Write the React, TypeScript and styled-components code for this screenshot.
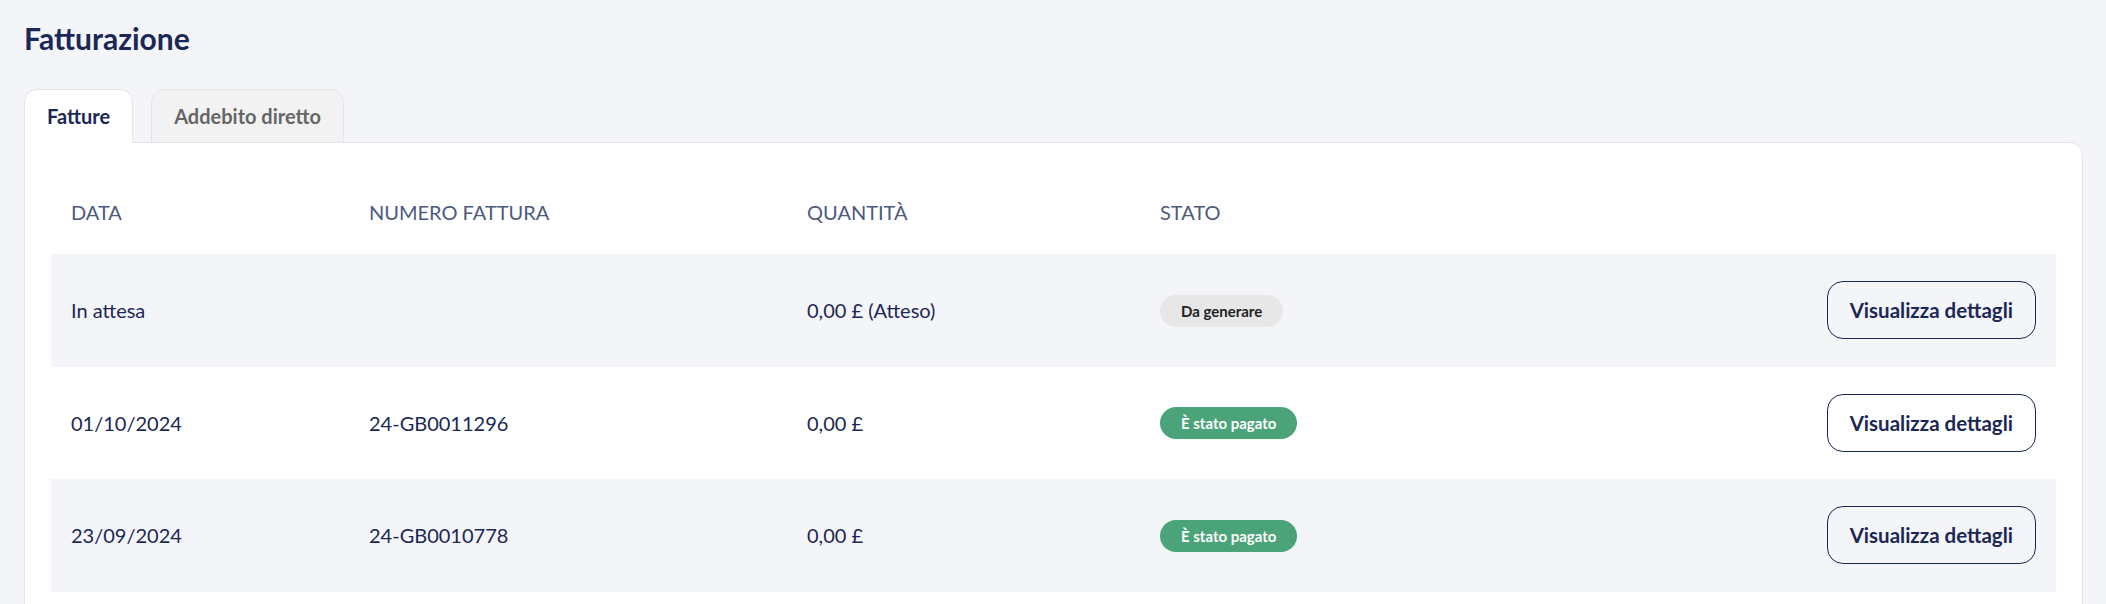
import styled, { createGlobalStyle } from 'styled-components';

const GlobalStyle = createGlobalStyle`
  body {
    margin: 0;
    background: #f4f5f9;
    font-family: Lato, "Noto Sans", sans-serif;
    color: #1b2856;
  }
`;

const Page = styled.div`
  padding: 20px 23px 0 24px;
`;

const Title = styled.h1`
  margin: 0;
  font-size: 30px;
  line-height: 36px;
  font-weight: 700;
  color: #1b2856;
`;

const Tabs = styled.div`
  display: flex;
  gap: 18px;
  margin-top: 33px;
  position: relative;
  z-index: 1;
`;

const Tab = styled.div<{ $active?: boolean }>`
  height: 54px;
  padding: 0 22px;
  display: flex;
  align-items: center;
  font-size: 20px;
  font-weight: 700;
  border: 1px solid #e4e5e9;
  border-bottom: ${(p) => (p.$active ? '1px solid #ffffff' : '1px solid #e4e5e9')};
  border-radius: 13px 13px 0 0;
  background: ${(p) => (p.$active ? '#ffffff' : '#f2f2f3')};
  color: ${(p) => (p.$active ? '#1b2856' : '#666666')};
  margin-bottom: -1px;
  box-sizing: border-box;
`;

const Card = styled.div`
  background: #ffffff;
  border: 1px solid #e4e5e9;
  border-radius: 0 13px 0 0;
  padding: 40px 26px 40px 26px;
`;

const Row = styled.div<{ $shaded?: boolean }>`
  display: grid;
  grid-template-columns: 298px 438px 353px 1fr auto;
  align-items: center;
  min-height: 112.5px;
  background: ${(p) => (p.$shaded ? '#f4f5f9' : '#ffffff')};
`;

const HeadRow = styled(Row)`
  min-height: 0;
`;

const HeadCell = styled.div`
  padding: 14px 20px 27px;
  line-height: 30px;
  font-size: 20px;
  color: #4d5a7f;
  text-transform: uppercase;
`;

const Cell = styled.div`
  padding: 0 20px;
  font-size: 20px;
  line-height: 30px;
  color: #1b2856;
`;

const ActionCell = styled(Cell)`
  justify-self: end;
`;

const Badge = styled.span<{ $tone: 'grey' | 'green' }>`
  display: inline-flex;
  align-items: center;
  height: 32px;
  padding: 0 21px;
  border-radius: 16px;
  font-size: 15px;
  font-weight: 700;
  background: ${(p) => (p.$tone === 'green' ? '#4ba37a' : '#e7e7e8')};
  color: ${(p) => (p.$tone === 'green' ? '#ffffff' : '#222222')};
`;

const DetailsButton = styled.button`
  height: 58px;
  padding: 0 22px;
  border: 1.5px solid #1b2856;
  border-radius: 16px;
  background: transparent;
  font-family: inherit;
  font-size: 20.5px;
  font-weight: 700;
  color: #1b2856;
  cursor: pointer;
`;

const invoices = [
  { date: 'In attesa', number: '', amount: '0,00 £ (Atteso)', status: 'Da generare', tone: 'grey' as const },
  { date: '01/10/2024', number: '24-GB0011296', amount: '0,00 £', status: 'È stato pagato', tone: 'green' as const },
  { date: '23/09/2024', number: '24-GB0010778', amount: '0,00 £', status: 'È stato pagato', tone: 'green' as const },
];

export default function App() {
  return (
    <>
      <GlobalStyle />
      <Page>
        <Title>Fatturazione</Title>
        <Tabs>
          <Tab $active>Fatture</Tab>
          <Tab>Addebito diretto</Tab>
        </Tabs>
        <Card>
          <HeadRow>
            <HeadCell>Data</HeadCell>
            <HeadCell>Numero fattura</HeadCell>
            <HeadCell>Quantità</HeadCell>
            <HeadCell>Stato</HeadCell>
            <HeadCell />
          </HeadRow>
          {invoices.map((inv, i) => (
            <Row key={i} $shaded={i % 2 === 0}>
              <Cell>{inv.date}</Cell>
              <Cell>{inv.number}</Cell>
              <Cell>{inv.amount}</Cell>
              <Cell>
                <Badge $tone={inv.tone}>{inv.status}</Badge>
              </Cell>
              <ActionCell>
                <DetailsButton>Visualizza dettagli</DetailsButton>
              </ActionCell>
            </Row>
          ))}
        </Card>
      </Page>
    </>
  );
}
